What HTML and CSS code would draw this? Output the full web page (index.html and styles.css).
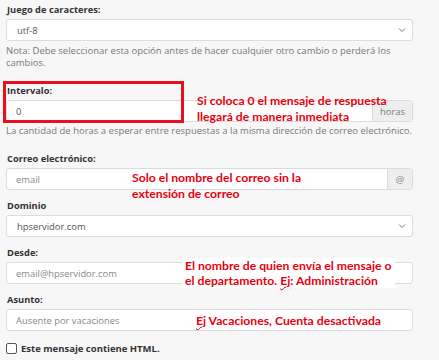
FILE: index.html
```html
<!DOCTYPE html>
<html lang="es">
<head>
    <meta charset="UTF-8">
    <title>Autorespondedor</title>
    <link rel="stylesheet" href="styles.css">
</head>
<body>
    <div class="form">
        <div class="group first">
            <label class="label">Juego de caracteres:</label>
            <div class="field select">
                <span>utf-8</span>
                <svg class="chev" width="8" height="6" viewBox="0 0 8 6"><path d="M1 1.5 L4 4.5 L7 1.5" fill="none" stroke="#777" stroke-width="1"/></svg>
            </div>
            <p class="help">Nota: Debe seleccionar esta opción antes de hacer cualquier otro cambio o perderá los<br>cambios.</p>
        </div>

        <div class="group">
            <div class="mark"></div>
            <label class="label">Intervalo:</label>
            <div class="field addon-field">
                <span class="value">0</span>
                <span class="addon">horas</span>
            </div>
            <p class="help">La cantidad de horas a esperar entre respuestas a la misma dirección de correo electrónico.</p>
            <div class="note note-interval">Si coloca 0 el mensaje de respuesta<br>llegará de manera inmediata</div>
        </div>

        <div class="group">
            <label class="label">Correo electrónico:</label>
            <div class="field addon-field">
                <span class="value ph">email</span>
                <span class="addon at">@</span>
            </div>
            <div class="note note-email">Solo el nombre del correo sin la<br>extensión de correo</div>
        </div>

        <div class="group">
            <label class="label">Dominio</label>
            <div class="field select">
                <span>hpservidor.com</span>
                <svg class="chev" width="8" height="6" viewBox="0 0 8 6"><path d="M1 1.5 L4 4.5 L7 1.5" fill="none" stroke="#777" stroke-width="1"/></svg>
            </div>
        </div>

        <div class="group">
            <label class="label">Desde:</label>
            <div class="field">
                <span class="value ph">email@hpservidor.com</span>
            </div>
            <div class="note note-from">El nombre de quien envía el mensaje o<br>el departamento. <span class="spell">Ej</span>: Administración</div>
        </div>

        <div class="group">
            <label class="label">Asunto:</label>
            <div class="field">
                <span class="value ph">Ausente por vacaciones</span>
            </div>
            <div class="note note-subject"><span class="spell">Ej</span> Vacaciones, Cuenta desactivada</div>
        </div>

        <div class="check">
            <span class="box"></span>
            <span>Este mensaje contiene HTML.</span>
        </div>
    </div>
</body>
</html>
```

FILE: styles.css
```css
body {
    margin: 0;
    background-color: #f7f7f7;
    font-family: "Open Sans", sans-serif;
    color: #333;
}

.form {
    padding: 0 26px 0 6px;
}

.group {
    position: relative;
    margin-top: 9px;
}

.group.first {
    margin-top: 0;
    padding-top: 3px;
}

.label {
    display: block;
    font-size: 9.3px;
    font-weight: bold;
    line-height: 14px;
    margin: 0 0 2px 1px;
    color: #333;
}

.field {
    display: flex;
    align-items: center;
    height: 20px;
    background-color: #fff;
    border: 1px solid #dcdcdc;
    border-radius: 3px;
    font-size: 9.4px;
    color: #555;
    overflow: hidden;
}

.field .value {
    flex: 1;
    padding-left: 9px;
}

.field .ph {
    color: #888;
}

.select {
    justify-content: space-between;
    padding: 0 6px 0 10px;
}

.addon {
    display: flex;
    align-items: center;
    justify-content: center;
    width: 39px;
    height: 100%;
    background-color: #eeeeee;
    border-left: 1px solid #dcdcdc;
    color: #777;
}

.addon.at {
    width: 24px;
    color: #888;
}

.help {
    margin: 3px 0 0 0;
    padding-bottom: 6px;
    font-size: 9.5px;
    line-height: 12px;
    color: #777;
    white-space: nowrap;
}

.group.first .help {
    margin-top: 4px;
}

.mark {
    position: absolute;
    left: -3px;
    top: -3px;
    width: 175px;
    height: 36px;
    border: 3px solid #ea0f1f;
}

.note {
    position: absolute;
    background-color: #fff;
    color: #e8000e;
    font-family: Lato, "Liberation Sans", sans-serif;
    font-weight: bold;
    font-size: 12.2px;
    line-height: 16px;
    padding: 0 3px;
    white-space: nowrap;
}

.note-interval {
    left: 188px;
    top: 9px;
    background-color: transparent;
}

.note-email {
    left: 123px;
    top: 18px;
    background-color: transparent;
}

.note-from {
    left: 176px;
    top: 12px;
    line-height: 15px;
}

.note-subject {
    left: 187px;
    top: 20px;
}

.spell {
    text-decoration: underline wavy #d00;
    text-decoration-thickness: 1px;
}

.check {
    display: flex;
    align-items: center;
    gap: 4px;
    margin-top: 11px;
    font-size: 9.5px;
    font-weight: bold;
    color: #333;
}

.check .box {
    width: 9px;
    height: 9px;
    border: 1px solid #555;
    border-radius: 2px;
    background-color: #fff;
}
```
